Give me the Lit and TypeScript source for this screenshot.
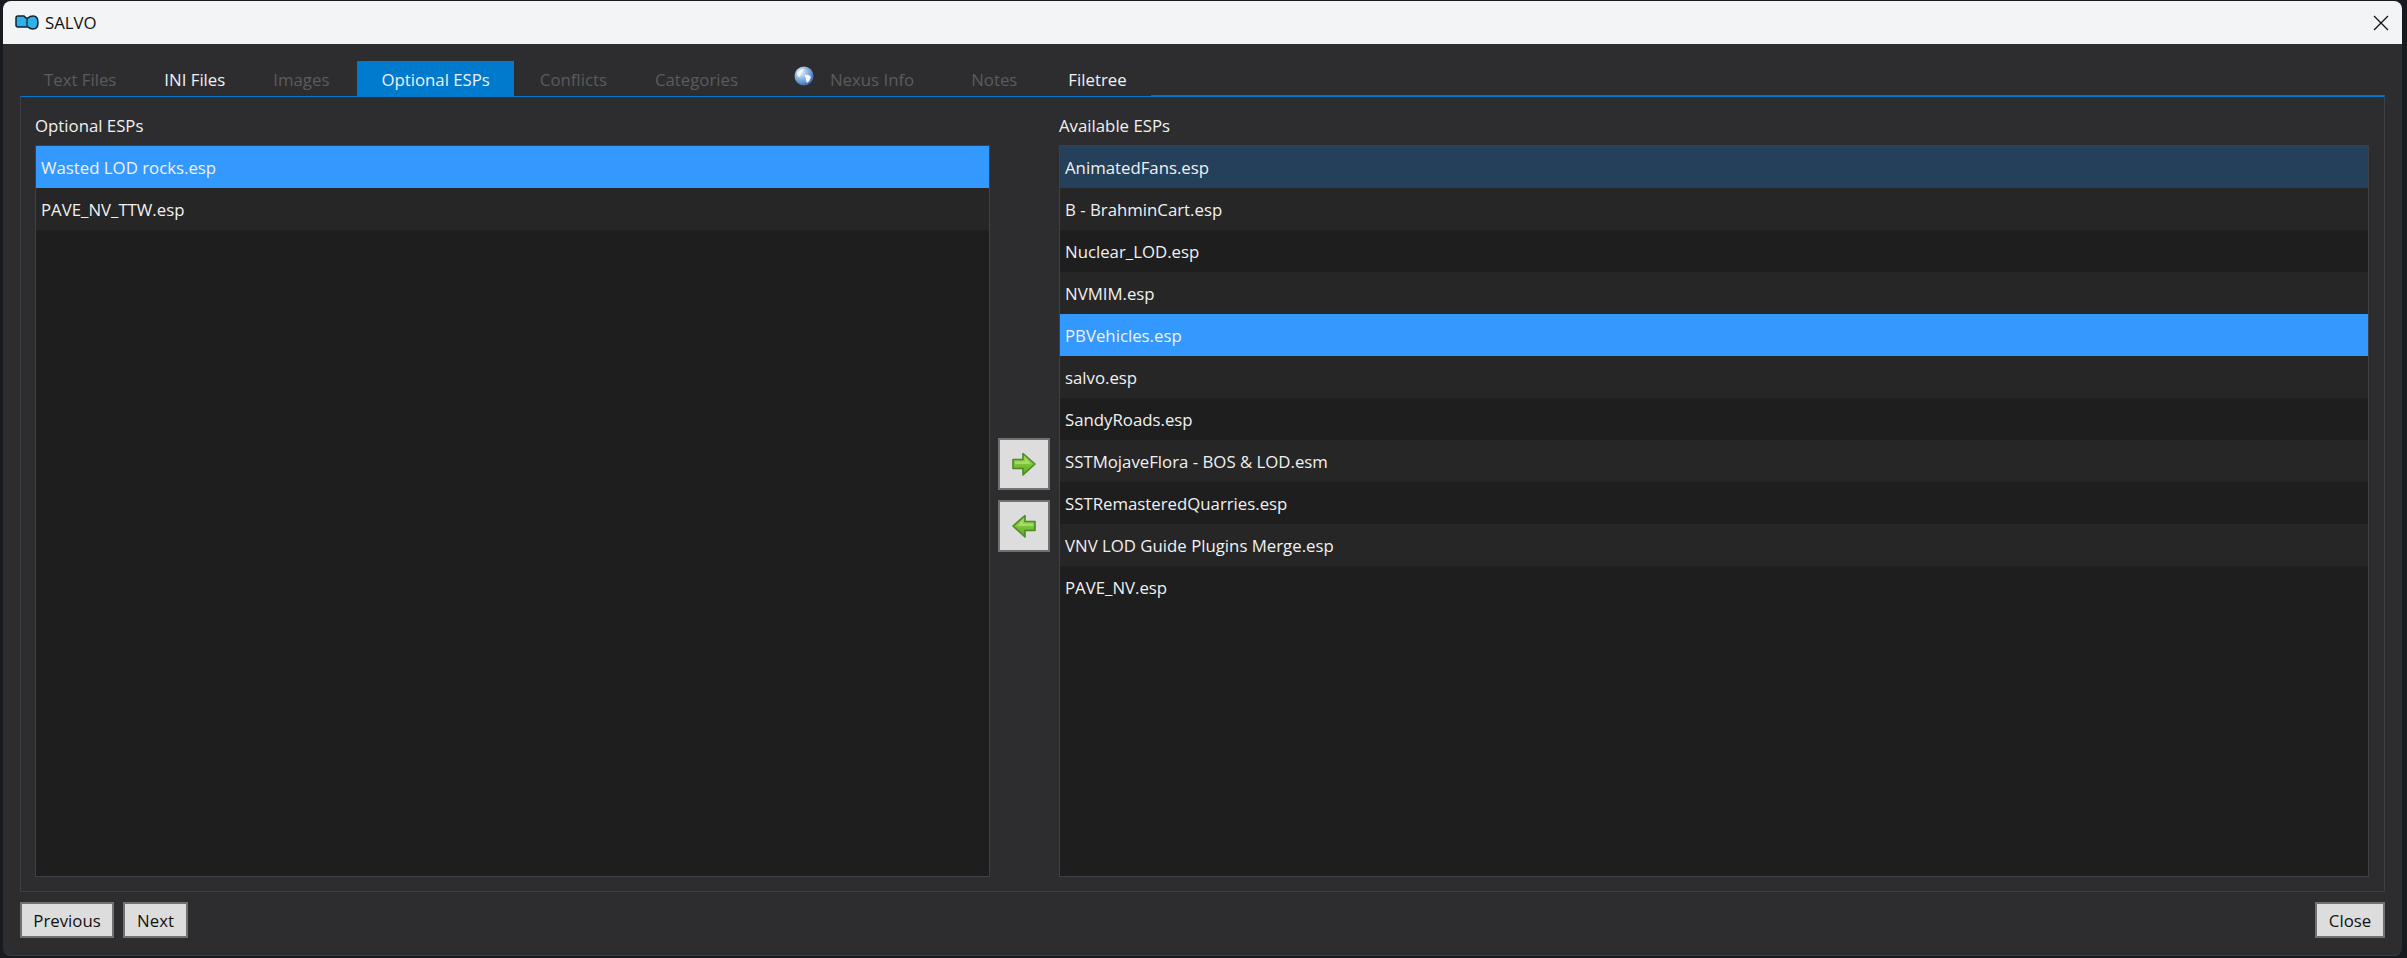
import { LitElement, html, css, svg } from "lit";
import { customElement } from "lit/decorators.js";

const left = ["Wasted LOD rocks.esp", "PAVE_NV_TTW.esp"];
const right = [
  "AnimatedFans.esp", "B - BrahminCart.esp", "Nuclear_LOD.esp", "NVMIM.esp", "PBVehicles.esp", "salvo.esp",
  "SandyRoads.esp", "SSTMojaveFlora - BOS & LOD.esm", "SSTRemasteredQuarries.esp", "VNV LOD Guide Plugins Merge.esp", "PAVE_NV.esp",
];
const tabs: [string, string][] = [
  ["Text Files", "off"], ["INI Files", "on"], ["Images", "off"], ["Optional ESPs", "active"], ["Conflicts", "off"],
  ["Categories", "off"], ["Nexus Info", "off globe"], ["Notes", "off notes"], ["Filetree", "on"],
];

const arrow = (flip: boolean) => html`<svg width="28" height="28" viewBox="0 0 28 28">
  <defs><linearGradient id=${flip ? "ga" : "gb"} x1="0" y1="0" x2="0" y2="1">
    <stop offset="0" stop-color="#a6dc5e"/><stop offset="0.5" stop-color="#7cc23a"/><stop offset="1" stop-color="#5fa428"/>
  </linearGradient></defs>
  <g transform=${flip ? "translate(28,0) scale(-1,1)" : ""}>
    ${svg`<path d="M3 9.5H13V3.5L25 14L13 25V18.5H3Z" fill="url(#${flip ? "ga" : "gb"})" stroke="#4e8a22" stroke-width="1.6" stroke-linejoin="round"/>
    <path d="M5 11.5H15V8L21 14H5Z" fill="#c4eb8e" opacity=".55"/>`}
  </g></svg>`;

@customElement("app-root")
export class AppRoot extends LitElement {
  static styles = css`
    :host { display: block; width: 2407px; height: 958px; box-sizing: border-box; padding: 1px 5px 2px 3px; background: #171a1f; font-family: "Open Sans", "Noto Sans", sans-serif; font-size: 16.8px; color: #f1f1f1; }
    .win { height: 100%; display: flex; flex-direction: column; background: #2d2d30; border-radius: 8px; overflow: hidden; border-bottom: 1px solid #3c3c3f; box-sizing: border-box; }
    .title { height: 43px; flex: none; background: #f3f4f6; color: #111; display: flex; align-items: center; padding: 0 13px 0 12px; gap: 6px; font-size: 16.8px; }
    .title .x { margin-left: auto; }
    .body { flex: 1; display: flex; flex-direction: column; padding: 17px 17px 0 17px; min-height: 0; }
    .tabs { display: flex; height: 36px; flex: none; margin-bottom: -1px; }
    .tab { display: flex; align-items: center; padding: 0 24px; height: 36px; box-sizing: border-box; }
    .tab.off { color: #5b5b5d; }
    .tab.on { color: #f1f1f1; }
    .tab.active { background: #007acc; color: #f1f1f1; margin: 0 2px 0 4px; }
    .tab.globe { gap: 16px; margin: 0 9px 0 8px; }
    .tab.notes { margin-right: 3px; }
    .tab.globe svg { margin-top: -6px; }
    .fill { flex: 1; align-self: flex-end; height: 2px; background: #0a6db3; }
    .panel { height: 796px; flex: none; box-sizing: border-box; border: 1px solid #3f3f46; border-top: 1px solid #007acc; padding: 15px 15px 14px 14px; display: grid; grid-template-columns: 955px 69px 1fr; }
    .col { display: flex; flex-direction: column; min-height: 0; }
    .col h2 { font: inherit; margin: 0; height: 33px; flex: none; display: flex; align-items: center; padding-bottom: 7px; box-sizing: border-box; }
    .list { flex: 1; background: #1e1e1e; border: 1px solid #3f3f46; box-sizing: border-box; overflow: hidden; }
    .row { height: 42px; display: flex; align-items: center; padding-left: 5px; background: #1e1e1e; }
    .row:nth-child(even) { background: #262626; }
    .row.sel { background: #3399ff; }
    .row.hov { background: #25405a; }
    .mid { display: flex; flex-direction: column; align-items: center; justify-content: center; gap: 10px; box-sizing: border-box; padding-top: 1px; padding-right: 1px; }
    .mid button { width: 52px; height: 52px; padding: 0; display: flex; align-items: center; justify-content: center; }
    button { background: #dddddd; border: 2px solid #707070; color: #111; font: inherit; box-sizing: border-box; }
    .foot { flex: 1; display: flex; align-items: flex-start; gap: 9px; padding-top: 10px; }
    .foot button { height: 36px; }
    .prev { width: 94px; }
    .next { width: 65px; }
    .close { width: 70px; margin-left: auto; }
  `;

  render() {
    return html`<div class="win">
      <div class="title">
        <svg width="24" height="15" viewBox="0 0 24 15">
          <path d="M1 3Q1 1 3 1H9L11 3H13Q15 1 18 1Q23 1 23 7.5Q23 14 18 14Q15 14 13 12H3Q1 12 1 10Z" fill="#2fb2e8" stroke="#123" stroke-width="1.5"/>
          <path d="M12 3.5V11" stroke="#123" stroke-width="1.2"/>
        </svg>
        <span>SALVO</span>
        <svg class="x" width="16" height="16" viewBox="0 0 16 16"><path d="M1 1L15 15M15 1L1 15" stroke="#111" stroke-width="1.3" fill="none"/></svg>
      </div>
      <div class="body">
        <div class="tabs">
          ${tabs.map(([t, c]) => html`<div class="tab ${c}">
            ${c.includes("globe") ? html`<svg width="20" height="20" viewBox="0 0 20 20">
              <defs><radialGradient id="gl" cx=".35" cy=".3" r=".8"><stop offset="0" stop-color="#e8f2fc"/><stop offset=".6" stop-color="#6f9ed8"/><stop offset="1" stop-color="#2c5a9c"/></radialGradient></defs>
              <circle cx="10" cy="10" r="9.5" fill="url(#gl)"/>
              <path d="M3 7Q6 3 10 3Q9 6 7 7Q7 10 5 11Q3 10 3 7ZM11 9Q15 8 17 11Q16 15 13 17Q11 14 12 12Q10 11 11 9Z" fill="#f4f6f8"/>
            </svg>` : ""}
            <span>${t}</span></div>`)}
          <div class="fill"></div>
        </div>
        <div class="panel">
          <div class="col">
            <h2>Optional ESPs</h2>
            <div class="list">${left.map((t, i) => html`<div class="row ${i === 0 ? "sel" : ""}">${t}</div>`)}</div>
          </div>
          <div class="mid">
            <button>${arrow(false)}</button>
            <button>${arrow(true)}</button>
          </div>
          <div class="col r">
            <h2>Available ESPs</h2>
            <div class="list">${right.map((t, i) => html`<div class="row ${i === 4 ? "sel" : i === 0 ? "hov" : ""}">${t}</div>`)}</div>
          </div>
        </div>
        <div class="foot">
          <button class="prev">Previous</button>
          <button class="next">Next</button>
          <button class="close">Close</button>
        </div>
      </div>
    </div>`;
  }
}
